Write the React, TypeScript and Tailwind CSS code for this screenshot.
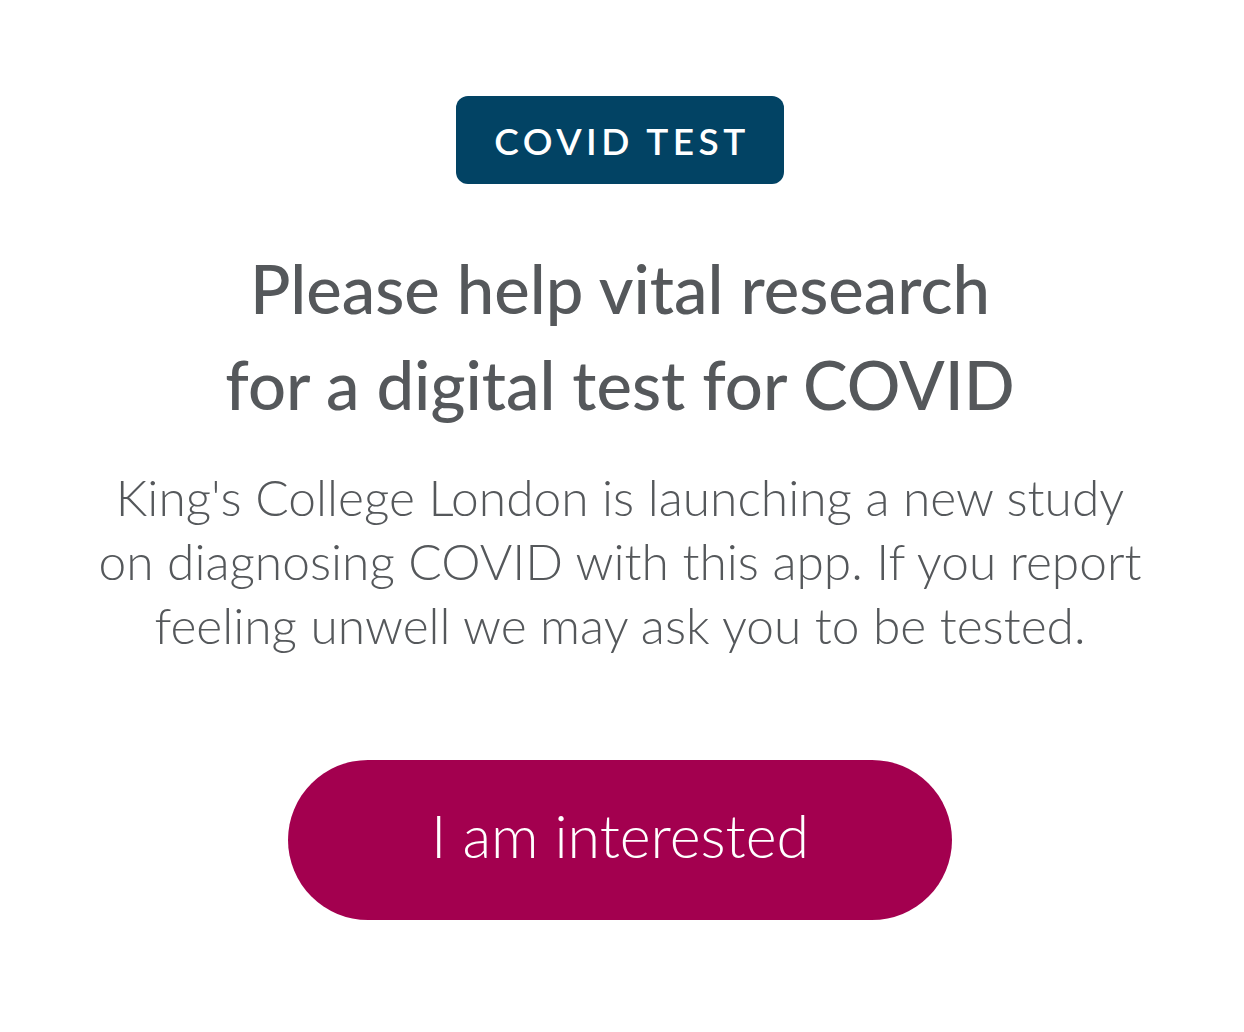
export default function App() {
  return (
    <div className="min-h-[1032px] w-full bg-white flex flex-col items-center pt-[96px] pr-[4px]" style={{ fontFamily: "Lato, 'Open Sans', sans-serif" }}>
      <div className="w-[328px] h-[88px] rounded-[12px] bg-[#024364] flex items-center justify-center">
        <span className="text-white text-[37px] font-semibold tracking-[0.12em] leading-none pl-[4px]">COVID TEST</span>
      </div>
      <h1 className="mt-[56px] text-center text-[#55585b] text-[67px] font-medium leading-[96px]">
        Please help vital research
        <br />
        for a digital test for COVID
      </h1>
      <p className="mt-[33px] text-center text-[#55585b] text-[49.7px] font-light leading-[64px]">
        King's College London is launching a new study
        <br />
        on diagnosing COVID with this app. If you report
        <br />
        feeling unwell we may ask you to be tested.
      </p>
      <button className="mt-[103px] w-[664px] h-[160px] rounded-full bg-[#a3004f] text-white text-[59px] font-light flex items-center justify-center pb-[8px]">
        I am interested
      </button>
    </div>
  );
}
